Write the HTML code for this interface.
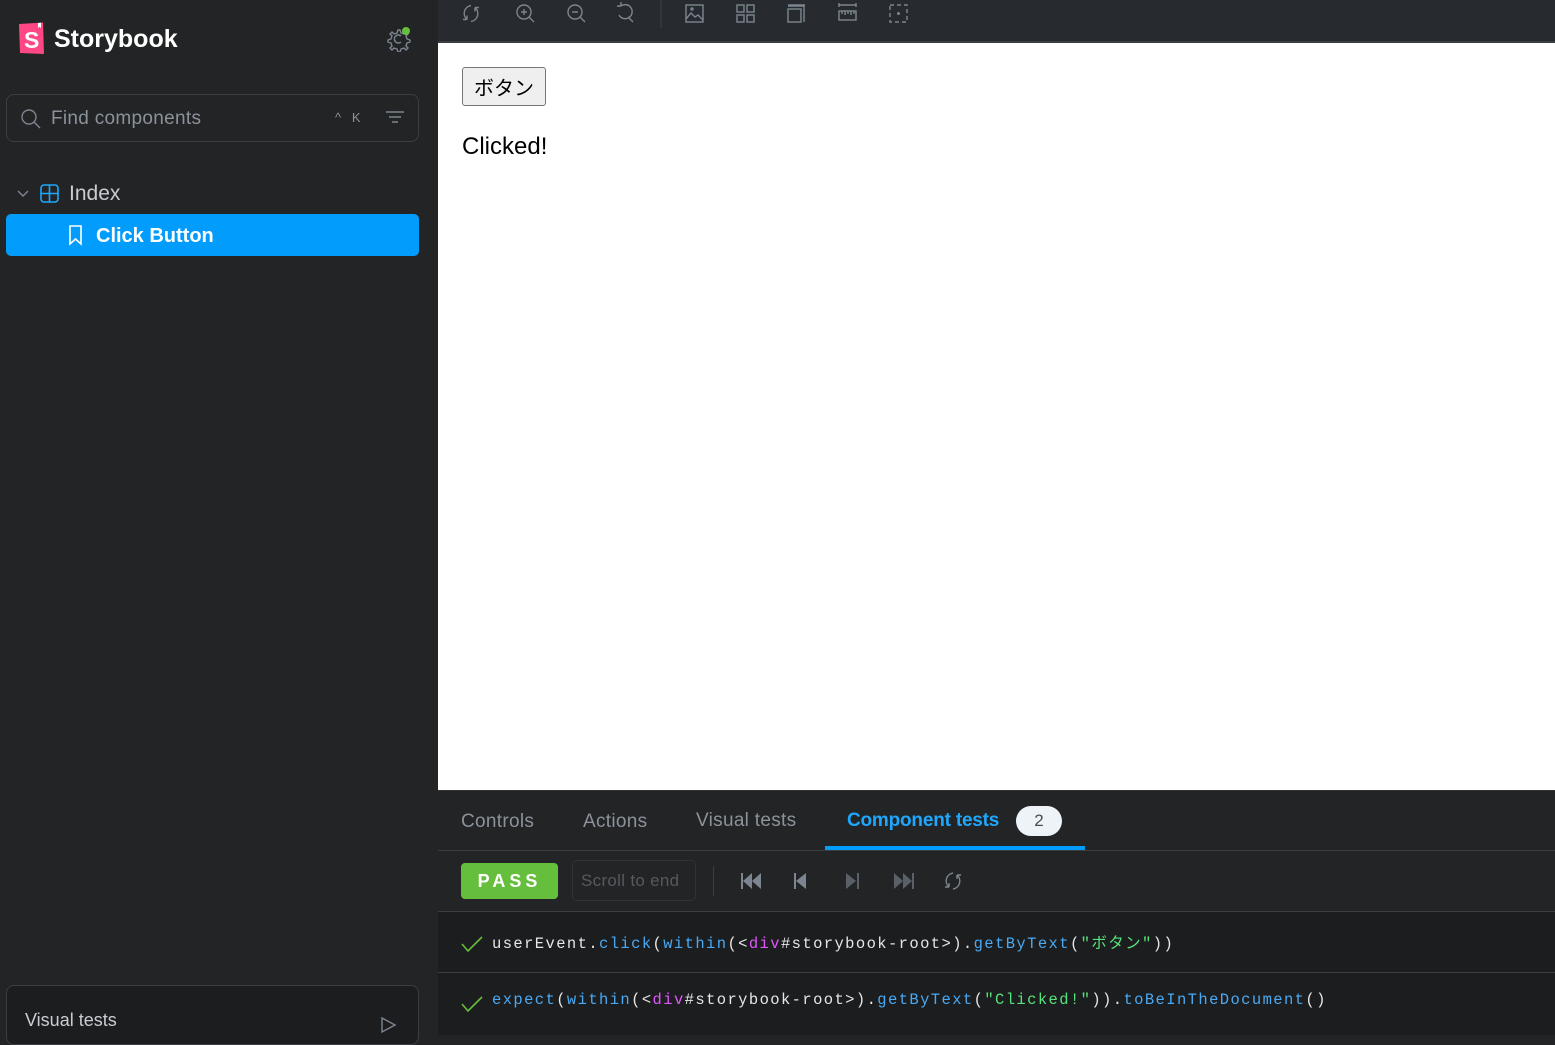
<!DOCTYPE html>
<html><head><meta charset="utf-8"><style>
*{box-sizing:border-box;margin:0;padding:0}
body{width:1555px;height:1035px;overflow:hidden;background:#222425;font-family:"Liberation Sans","Noto Sans CJK JP",sans-serif;position:relative}
.abs{position:absolute}
.ic{stroke:#7c8590;fill:none;stroke-width:1.4}
.mono{font-family:"Liberation Mono","Noto Sans CJK JP",monospace;font-size:15.5px;letter-spacing:1.4px}
</style></head><body>
<div class="abs" style="left:0;top:0;width:438px;height:1035px;background:#222425"></div>
<svg class="abs" style="left:18px;top:22px" width="27" height="33" viewBox="0 0 27 33"><path d="M1 2 L25 0.5 L26 32 L2 31 Z" fill="#ff4785"/><path d="M20 1 v5 l1.5-1.2 1.5 1.2 v-5.2" fill="#fff"/><text x="6" y="26" font-family="Liberation Sans" font-weight="bold" font-size="23" fill="#fff">S</text></svg>
<div class="abs" style="left:54px;top:25px;color:#fff;font-weight:bold;font-size:25px;letter-spacing:0px">Storybook</div>
<svg class="abs" style="left:386px;top:26px" width="26" height="26" viewBox="0 0 26 26"><path d="M12 4l2 0 1 3 3 1 2-2 2 2-2 2 1 3 3 1v2l-3 1-1 3 2 2-2 2-2-2-3 1-1 3h-2l-1-3-3-1-2 2-2-2 2-2-1-3-3-1v-2l3-1 1-3-2-2 2-2 2 2 3-1z" class="ic" stroke-width="1.2"/><path d="M15 10a4 4 0 1 0 0 6" class="ic"/><circle cx="20" cy="5" r="4" fill="#66bf3c"/></svg>
<div class="abs" style="left:6px;top:94px;width:413px;height:48px;border:1px solid #3b3e42;border-radius:8px"></div>
<svg class="abs" style="left:20px;top:108px" width="22" height="22"><circle cx="9" cy="9" r="7" class="ic" stroke-width="1.6"/><path d="M14 14 L20 20" class="ic" stroke-width="1.6"/></svg>
<div class="abs" style="left:51px;top:108px;color:#8b929a;font-size:19px;letter-spacing:0.3px">Find components</div>
<div class="abs" style="left:335px;top:110px;color:#8b929a;font-size:13px">^&nbsp;&nbsp;&nbsp;K</div>
<svg class="abs" style="left:385px;top:110px" width="20" height="16"><path d="M1 2h18M4 7h12M7 12h6" class="ic"/></svg>
<svg class="abs" style="left:16px;top:187px" width="14" height="14"><path d="M2 4l5 5 5-5" class="ic"/></svg>
<svg class="abs" style="left:40px;top:184px" width="20" height="20"><rect x="1" y="1" width="17" height="17" rx="3" fill="none" stroke="#1ea7fd" stroke-width="1.6"/><path d="M9.5 1v17M1 9.5h17" stroke="#1ea7fd" stroke-width="1.6"/></svg>
<div class="abs" style="left:69px;top:182px;color:#c9cdd2;font-size:21px">Index</div>
<div class="abs" style="left:6px;top:214px;width:413px;height:42px;background:#029cfd;border-radius:5px"></div>
<svg class="abs" style="left:68px;top:225px" width="16" height="22"><path d="M2 1h11v18l-5.5-5-5.5 5z" fill="none" stroke="#fff" stroke-width="1.6"/></svg>
<div class="abs" style="left:96px;top:225px;color:#fff;font-weight:bold;font-size:20px">Click Button</div>
<div class="abs" style="left:6px;top:985px;width:413px;height:60px;border:1px solid #3b3e42;border-radius:8px;background:#1c1d1f"></div>
<div class="abs" style="left:25px;top:1010px;color:#c9cdd2;font-size:18px">Visual tests</div>
<svg class="abs" style="left:380px;top:1016px" width="18" height="18"><path d="M2 2l13 7-13 7z" class="ic"/></svg>
<div class="abs" style="left:438px;top:0;width:1117px;height:43px;background:#272a2e;border-bottom:2px solid #3a3d41"></div>
<svg class="abs" style="left:438px;top:0" width="500" height="40" viewBox="0 0 500 40">
<g class="ic">
<path d="M33 5.5a8 8 0 0 0-4 14M29 19.5l0-4M29 19.5l-4 0M33 21.5a8 8 0 0 0 4-14M37 7.5l0 4M37 7.5l4 0"/>
<circle cx="86" cy="12" r="7"/><path d="M91 17l5 5M86 9v6M83 12h6"/>
<circle cx="137" cy="12" r="7"/><path d="M142 17l5 5M134 12h6"/>
<path d="M183 6a7 7 0 1 1 -2 9M183 6l-4 0M183 6l0-4M190 17l5 5"/>
<path d="M223 0v28" stroke="#3a3d41"/>
<rect x="248" y="5" width="17" height="17"/><path d="M248 19l5-6 4 4 3-2 5 5"/><circle cx="254" cy="9" r="1"/>
<rect x="299" y="5" width="7" height="7"/><rect x="309" y="5" width="7" height="7"/><rect x="299" y="15" width="7" height="7"/><rect x="309" y="15" width="7" height="7"/>
<rect x="350" y="9" width="13" height="13"/><path d="M350 6h16v16M350 5h17"/>
<path d="M401 5h17M401 3v4M418 3v4"/><rect x="401" y="11" width="17" height="9"/><path d="M404 11v3M407 11v4M410 11v3M413 11v4M416 11v3"/>
<rect x="452" y="5" width="17" height="17" stroke-dasharray="4 3"/><circle cx="460.5" cy="13.5" r="0.8" fill="#7c8590"/>
</g></svg>
<div class="abs" style="left:438px;top:43px;width:1117px;height:747px;background:#fff"></div>
<div class="abs" style="left:462px;top:67px;width:84px;height:39px;background:#efefef;border:1px solid #767676;border-radius:3px;font-size:20px;padding:4px 0 0 11px;color:#000">ボタン</div>
<div class="abs" style="left:462px;top:133px;font-size:24px;color:#000">Clicked!</div>
<div class="abs" style="left:438px;top:790px;width:1117px;height:61px;background:#222425;border-bottom:1px solid #3a3d41;border-top:1px solid #333"></div>
<div class="abs" style="left:461px;top:811px;color:#8b929a;font-size:19px;letter-spacing:0.3px">Controls</div>
<div class="abs" style="left:583px;top:811px;color:#8b929a;font-size:19px;letter-spacing:0.3px">Actions</div>
<div class="abs" style="left:696px;top:810px;color:#8b929a;font-size:19px;letter-spacing:0.3px">Visual tests</div>
<div class="abs" style="left:847px;top:810px;color:#1ea7fd;font-size:19px;font-weight:bold;letter-spacing:-0.2px">Component tests</div>
<div class="abs" style="left:1016px;top:806px;width:46px;height:30px;border-radius:15px;background:#eef3f8;color:#454e54;font-size:17px;text-align:center;line-height:30px">2</div>
<div class="abs" style="left:825px;top:846px;width:260px;height:4px;background:#029cfd"></div>
<div class="abs" style="left:438px;top:851px;width:1117px;height:61px;background:#222425;border-bottom:1px solid #3a3d41"></div>
<div class="abs" style="left:461px;top:863px;width:97px;height:36px;background:#66bf3c;border-radius:4px;color:#fff;font-weight:bold;font-size:18px;letter-spacing:4px;text-align:center;line-height:36px">PASS</div>
<div class="abs" style="left:572px;top:860px;width:124px;height:41px;border:1px solid #2f3236;border-radius:5px;color:#555a60;font-size:17px;padding:10px 0 0 8px;letter-spacing:0.3px">Scroll to end</div>
<div class="abs" style="left:713px;top:866px;width:1px;height:30px;background:#3a3d41"></div>
<svg class="abs" style="left:735px;top:868px" width="240" height="28">
<g fill="#7c8590"><path d="M6 5h2v16H6zM17 5v16l-9-8zM26 5v16l-9-8z"/><path d="M59 5h2v16h-2zM71 5v16l-10-8z"/><path d="M111 5v16l10-8zM122 5h2v16h-2z" fill="#5a6068"/><path d="M159 5v16l9-8zM168 5v16l9-8zM177 5h2v16h-2z" fill="#5a6068"/></g>
<path d="M218 5a8 8 0 0 0-4 14M214 19l0-4M214 19l-4 0M218 21a8 8 0 0 0 4-14M222 7l0 4M222 7l4 0" class="ic"/></svg>
<div class="abs" style="left:438px;top:912px;width:1117px;height:61px;background:#1c1d1f;border-bottom:1px solid #3a3d41"></div>
<div class="abs" style="left:438px;top:973px;width:1117px;height:62px;background:#1c1d1f"></div>
<svg class="abs" style="left:460px;top:934px" width="24" height="20"><path d="M2 10l6 7L22 3" stroke="#66bf3c" stroke-width="1.6" fill="none"/></svg>
<svg class="abs" style="left:460px;top:994px" width="24" height="20"><path d="M2 10l6 7L22 3" stroke="#66bf3c" stroke-width="1.6" fill="none"/></svg>
<div class="abs mono" style="left:492px;top:931px;color:#e6e6e6;white-space:pre">userEvent.<span style="color:#4aa9f2">click</span>(<span style="color:#4aa9f2">within</span>(&lt;<span style="color:#e056fd">div</span>#storybook-root&gt;).<span style="color:#4aa9f2">getByText</span>(<span style="color:#58e27b">"ボタン"</span>))</div>
<div class="abs mono" style="left:492px;top:991px;color:#e6e6e6;white-space:pre"><span style="color:#4aa9f2">expect</span>(<span style="color:#4aa9f2">within</span>(&lt;<span style="color:#e056fd">div</span>#storybook-root&gt;).<span style="color:#4aa9f2">getByText</span>(<span style="color:#58e27b">"Clicked!"</span>)).<span style="color:#4aa9f2">toBeInTheDocument</span>()</div>
</body></html>
